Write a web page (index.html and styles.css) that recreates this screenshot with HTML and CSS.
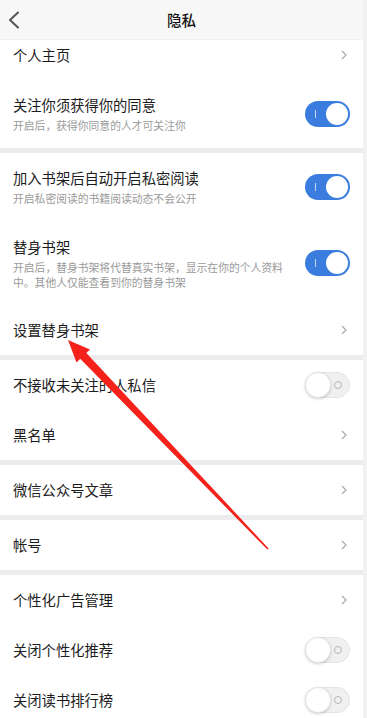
FILE: index.html
```html
<!DOCTYPE html>
<html lang="zh">
<head>
<meta charset="utf-8">
<title>隐私</title>
<link rel="stylesheet" href="styles.css">
</head>
<body>
<div class="page">
  <header class="topbar">
    <svg class="back" width="14" height="18" viewBox="0 0 14 18"><path d="M11 1.5 L3 9 L11 16.5" fill="none" stroke="#555" stroke-width="2" stroke-linecap="round" stroke-linejoin="round"/></svg>
    <h1 class="title">隐私</h1>
    <span></span>
  </header>

  <section class="group">
    <div class="row row-cut"><span class="label">个人主页</span><svg class="chev" width="6" height="10" viewBox="0 0 6 10"><path d="M1 1 L5 5 L1 9" fill="none" stroke="#aaa" stroke-width="1.2"/></svg></div>
    <div class="row row-sub">
      <div class="texts"><span class="label">关注你须获得你的同意</span><span class="sub">开启后，获得你同意的人才可关注你</span></div>
      <span class="toggle on"><span class="knob"></span></span>
    </div>
  </section>

  <section class="group">
    <div class="row row-sub">
      <div class="texts"><span class="label">加入书架后自动开启私密阅读</span><span class="sub">开启私密阅读的书籍阅读动态不会公开</span></div>
      <span class="toggle on"><span class="knob"></span></span>
    </div>
    <div class="row row-sub2">
      <div class="texts"><span class="label">替身书架</span><span class="sub">开启后，替身书架将代替真实书架，显示在你的个人资料中。其他人仅能查看到你的替身书架</span></div>
      <span class="toggle on"><span class="knob"></span></span>
    </div>
    <div class="row"><span class="label">设置替身书架</span><svg class="chev" width="6" height="10" viewBox="0 0 6 10"><path d="M1 1 L5 5 L1 9" fill="none" stroke="#aaa" stroke-width="1.2"/></svg></div>
  </section>

  <section class="group">
    <div class="row"><span class="label">不接收未关注的人私信</span><span class="toggle off"><span class="knob"></span></span></div>
    <div class="row"><span class="label">黑名单</span><svg class="chev" width="6" height="10" viewBox="0 0 6 10"><path d="M1 1 L5 5 L1 9" fill="none" stroke="#aaa" stroke-width="1.2"/></svg></div>
  </section>

  <section class="group">
    <div class="row"><span class="label">微信公众号文章</span><svg class="chev" width="6" height="10" viewBox="0 0 6 10"><path d="M1 1 L5 5 L1 9" fill="none" stroke="#aaa" stroke-width="1.2"/></svg></div>
  </section>

  <section class="group">
    <div class="row"><span class="label">帐号</span><svg class="chev" width="6" height="10" viewBox="0 0 6 10"><path d="M1 1 L5 5 L1 9" fill="none" stroke="#aaa" stroke-width="1.2"/></svg></div>
  </section>

  <section class="group">
    <div class="row"><span class="label">个性化广告管理</span><svg class="chev" width="6" height="10" viewBox="0 0 6 10"><path d="M1 1 L5 5 L1 9" fill="none" stroke="#aaa" stroke-width="1.2"/></svg></div>
    <div class="row"><span class="label">关闭个性化推荐</span><span class="toggle off"><span class="knob"></span></span></div>
    <div class="row"><span class="label">关闭读书排行榜</span><span class="toggle off"><span class="knob"></span></span></div>
  </section>

  <svg class="arrow" width="367" height="718" viewBox="0 0 367 718">
    <polygon points="68,340 90,349.5 86.3,353 268.6,548.4 267.4,549.6 80.2,358.8 76.5,362.5" fill="#f5221b"/>
  </svg>
</div>
</body>
</html>
```

FILE: styles.css
```css
* { box-sizing: border-box; }
html, body { margin: 0; padding: 0; }
body {
  width: 367px;
  height: 718px;
  overflow: hidden;
  background: #f1f1f3;
  font-family: "Noto Sans CJK SC", "Noto Sans", sans-serif;
  color: #1c1c1c;
}
.page {
  position: relative;
  width: 363px;
  display: flex;
  flex-direction: column;
  gap: 5px;
  background: #ececef;
}
.topbar {
  height: 40px;
  background: #f7f7f7;
  display: grid;
  grid-template-columns: 40px 1fr 40px;
  align-items: center;
  margin-bottom: -5px;
  border-bottom: 1px solid #efefef;
}
.back { margin-left: 7px; }
.title {
  margin: 0;
  text-align: center;
  font-size: 14.5px;
  font-weight: 500;
  color: #111;
  line-height: 20px;
}
.group {
  background: #fff;
  display: flex;
  flex-direction: column;
}
.row {
  height: 50px;
  display: flex;
  align-items: center;
  justify-content: space-between;
  padding: 0 13px;
}
.row-cut { height: 40px; padding-bottom: 11px; }
.row-sub { height: 68px; }
.row-sub2 { height: 84px; }
.label {
  font-size: 14.3px;
  line-height: 20px;
  color: #1c1c1c;
}
.texts {
  display: flex;
  flex-direction: column;
  gap: 3px;
}
.sub {
  font-size: 10.8px;
  line-height: 15px;
  color: #9a9a9a;
  max-width: 276px;
}
.chev { margin-right: 3px; }
.toggle {
  position: relative;
  flex: none;
  width: 45px;
  height: 26px;
  border-radius: 13px;
}
.toggle.on { background: #3b7ddf; }
.toggle.on::before {
  content: "";
  position: absolute;
  left: 10px;
  top: 9px;
  width: 1px;
  height: 8px;
  background: rgba(255,255,255,0.7);
}
.toggle.on .knob {
  position: absolute;
  right: 2px;
  top: 2px;
  width: 22px;
  height: 22px;
  border-radius: 50%;
  background: #fff;
}
.toggle.off {
  background: #f0f0f0;
  border: 1px solid #e4e4e4;
}
.toggle.off::after {
  content: "";
  position: absolute;
  right: 7px;
  top: 8px;
  width: 8px;
  height: 8px;
  border-radius: 50%;
  border: 1px solid #b5b5b5;
  box-sizing: border-box;
}
.toggle.off .knob {
  position: absolute;
  left: -1px;
  top: -1px;
  width: 26px;
  height: 26px;
  border-radius: 50%;
  background: #fff;
  box-shadow: 0 1px 3px rgba(0,0,0,0.18);
  border: 1px solid #e6e6e6;
}
.arrow {
  position: absolute;
  left: 0;
  top: 0;
  pointer-events: none;
}
```
